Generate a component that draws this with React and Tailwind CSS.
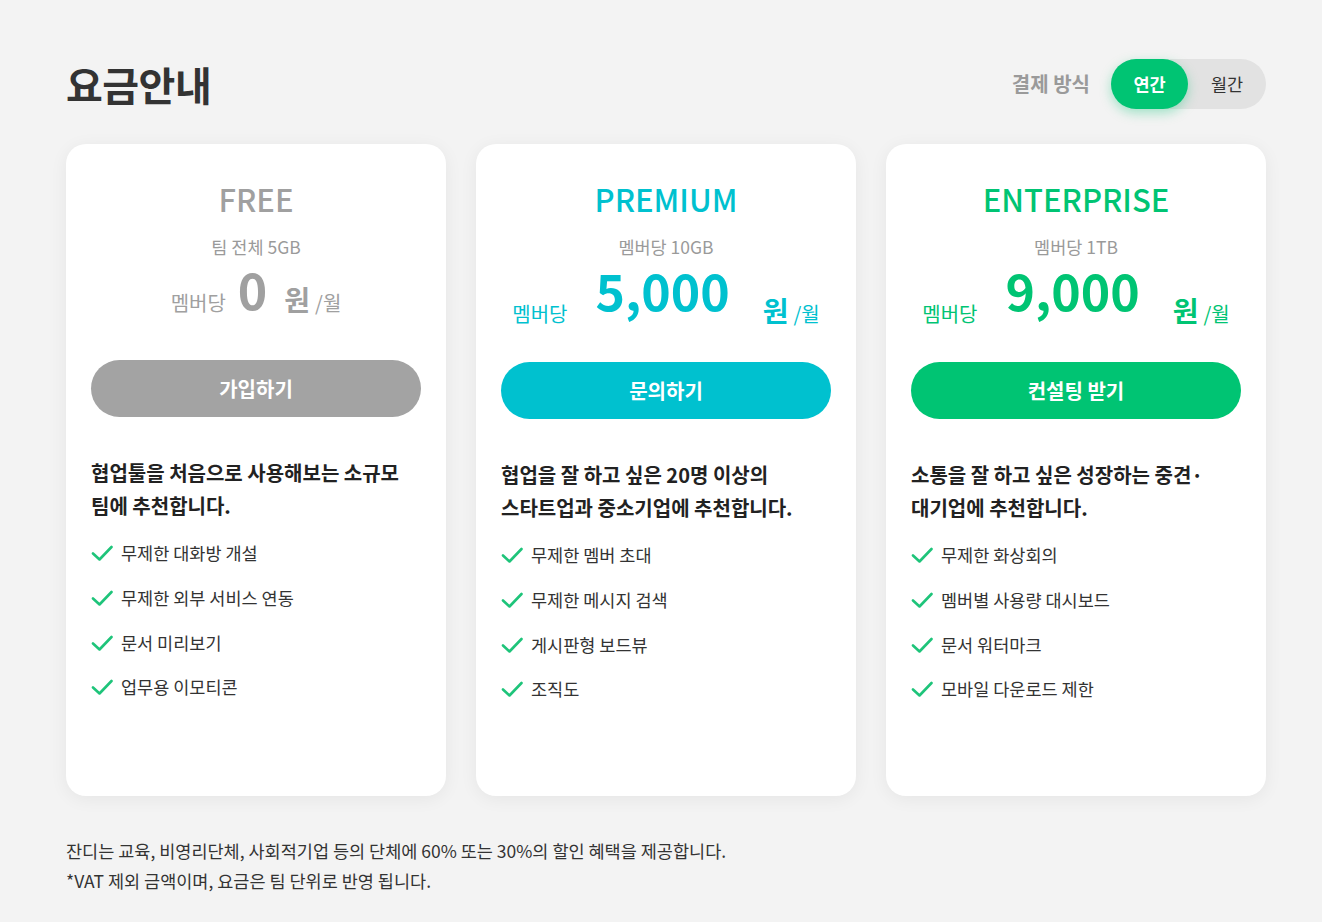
import React from "react";

const plans = [
  {
    name: "FREE",
    storage: "팀 전체 5GB",
    price: "0",
    color: "text-[#a0a0a0]",
    button: "bg-[#a3a3a3]",
    cta: "가입하기",
    free: true,
    desc: ["협업툴을 처음으로 사용해보는 소규모", "팀에 추천합니다."],
    features: ["무제한 대화방 개설", "무제한 외부 서비스 연동", "문서 미리보기", "업무용 이모티콘"],
  },
  {
    name: "PREMIUM",
    storage: "멤버당 10GB",
    price: "5,000",
    color: "text-[#00c1cf]",
    button: "bg-[#00c1cf]",
    cta: "문의하기",
    desc: ["협업을 잘 하고 싶은 20명 이상의", "스타트업과 중소기업에 추천합니다."],
    features: ["무제한 멤버 초대", "무제한 메시지 검색", "게시판형 보드뷰", "조직도"],
  },
  {
    name: "ENTERPRISE",
    storage: "멤버당 1TB",
    price: "9,000",
    color: "text-[#00c473]",
    button: "bg-[#00c473]",
    cta: "컨설팅 받기",
    desc: ["소통을 잘 하고 싶은 성장하는 중견·", "대기업에 추천합니다."],
    features: ["무제한 화상회의", "멤버별 사용량 대시보드", "문서 워터마크", "모바일 다운로드 제한"],
  },
];

function Check() {
  return (
    <svg width="22" height="16" viewBox="0 0 22 16" fill="none" className="shrink-0">
      <path d="M2 8.5l6.5 6L20.5 2" stroke="#1ec47a" strokeWidth="2.6" strokeLinecap="round" strokeLinejoin="round" />
    </svg>
  );
}

function PlanCard({ plan }) {
  return (
    <div className="w-[380px] h-[652px] bg-white rounded-[20px] shadow-[0_3px_18px_rgba(0,0,0,0.06)] pt-[35px] px-[25px]">
      <div className={`text-center text-[31px] leading-[40px] font-medium ${plan.color}`}>{plan.name}</div>
      <div className="mt-[18px] text-center text-[17.5px] leading-[20px] text-[#9a9a9a]">{plan.storage}</div>

      {plan.free ? (
        <div className="mt-[4px] h-[52px] flex items-end justify-center text-[#a0a0a0]">
          <span className="text-[20px] leading-none">멤버당</span>
          <span className="ml-[12px] mr-[17px] text-[50px] leading-none font-bold">{plan.price}</span>
          <span className="text-[28px] leading-none font-bold">원</span>
          <span className="ml-[5px] text-[20px] leading-none">/월</span>
        </div>
      ) : (
        <div className={`mt-[6px] h-[61px] flex items-end justify-center ${plan.color}`}>
          <span className="text-[20px] leading-none">멤버당</span>
          <span className="ml-[28px] mr-[33px] mb-[10px] text-[50px] leading-none font-bold">{plan.price}</span>
          <span className="text-[28px] leading-none font-bold">원</span>
          <span className="ml-[5px] text-[20px] leading-none">/월</span>
        </div>
      )}

      <button
        className={`w-full h-[57px] rounded-full text-white text-[20px] font-bold ${plan.button} ${plan.free ? "mt-[47px]" : "mt-[38px]"}`}
      >
        {plan.cta}
      </button>

      <p className="mt-[39px] text-[20px] leading-[33px] font-bold text-[#222]">
        {plan.desc[0]}
        <br />
        {plan.desc[1]}
      </p>

      <ul className="mt-[9px]">
        {plan.features.map((f) => (
          <li key={f} className="flex items-center gap-[8px] h-[44.7px] text-[17.5px] text-[#333]">
            <Check />
            <span>{f}</span>
          </li>
        ))}
      </ul>
    </div>
  );
}

export default function App() {
  return (
    <div
      className="min-h-[922px] bg-[#f3f3f3] px-[66px] pt-[59px] pb-[30px]"
      style={{ fontFamily: '"Noto Sans CJK KR", "Noto Sans", sans-serif' }}
    >
      <div className="w-[1200px]">
        <div className="flex items-center justify-between h-[50px]">
          <h1 className="text-[40px] font-bold text-[#333] tracking-[-0.5px]">요금안내</h1>
          <div className="flex items-center">
            <span className="mr-[21px] text-[20px] font-bold text-[#9a9a9a]">결제 방식</span>
            <div className="flex items-center w-[155px] h-[50px] rounded-full bg-[#e2e2e2]">
              <button className="w-[77px] h-[50px] rounded-full bg-[#00c473] text-white text-[17.5px] font-bold shadow-[0_4px_12px_rgba(0,196,115,0.35)]">
                연간
              </button>
              <button className="flex-1 h-[50px] text-[17.5px] text-[#333]">월간</button>
            </div>
          </div>
        </div>

        <div className="mt-[35px] flex gap-[30px]">
          {plans.map((p) => (
            <PlanCard key={p.name} plan={p} />
          ))}
        </div>

        <div className="mt-[40px] text-[17.5px] leading-[30px] text-[#333]">
          <p>잔디는 교육, 비영리단체, 사회적기업 등의 단체에 60% 또는 30%의 할인 혜택을 제공합니다.</p>
          <p>*VAT 제외 금액이며, 요금은 팀 단위로 반영 됩니다.</p>
        </div>
      </div>
    </div>
  );
}
